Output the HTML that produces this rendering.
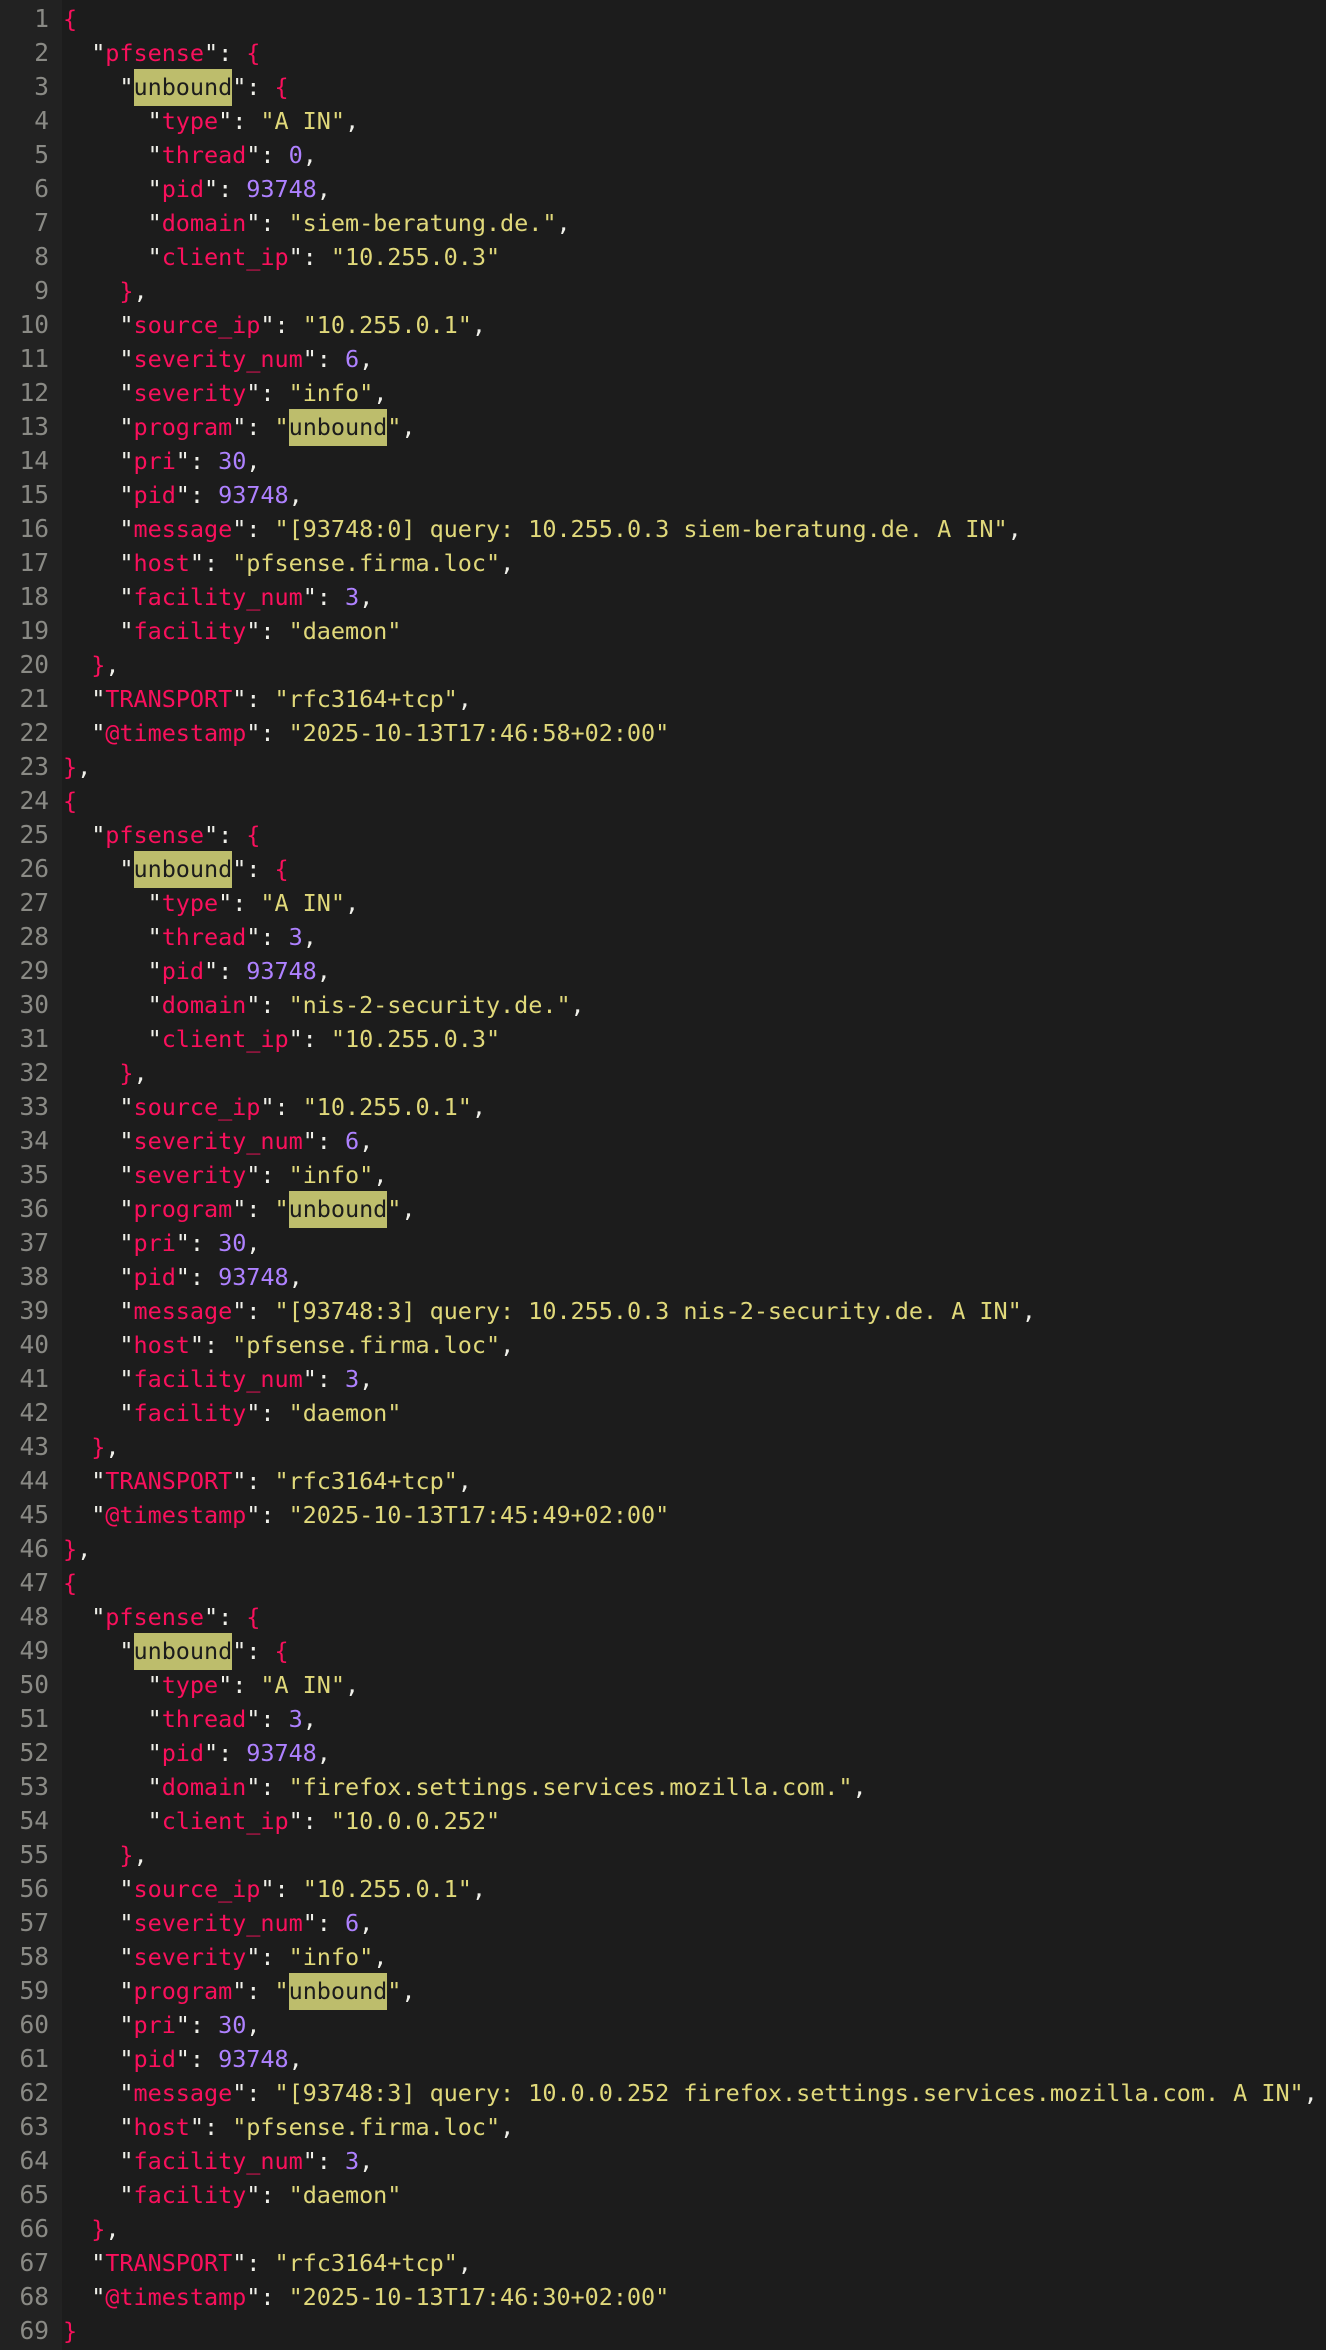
<!DOCTYPE html>
<html><head><meta charset="utf-8"><style>
html,body{margin:0;padding:0;background:#1c1c1c;width:1326px;height:2350px;overflow:hidden}
.g{position:absolute;left:0;top:0;width:62px;height:2350px;background:#222222}
.n{position:absolute;left:0;top:2px;width:49px;text-align:right;font:24.5px/34px "DejaVu Sans Mono","Liberation Mono",monospace;color:#8a8a85;white-space:pre}
pre{position:absolute;left:63px;top:2px;margin:0;font:23.5px/34px "DejaVu Sans Mono","Liberation Mono",monospace;color:#f0f0ea;letter-spacing:-0.05px}
.k{color:#f9105c}.s{color:#e0d87a}.m{color:#ae81ff}.b{color:#f9105c}
.h{background:#bdbd6c;color:#1c1c1c;padding:4px 0 5px}
</style></head><body>
<div class="g"></div>
<div class="n">1
2
3
4
5
6
7
8
9
10
11
12
13
14
15
16
17
18
19
20
21
22
23
24
25
26
27
28
29
30
31
32
33
34
35
36
37
38
39
40
41
42
43
44
45
46
47
48
49
50
51
52
53
54
55
56
57
58
59
60
61
62
63
64
65
66
67
68
69</div>
<pre><span class="b">{</span>
  "<span class="k">pfsense</span>": <span class="b">{</span>
    "<span class="h">unbound</span>": <span class="b">{</span>
      "<span class="k">type</span>": <span class="s">"A IN"</span>,
      "<span class="k">thread</span>": <span class="m">0</span>,
      "<span class="k">pid</span>": <span class="m">93748</span>,
      "<span class="k">domain</span>": <span class="s">"siem-beratung.de."</span>,
      "<span class="k">client_ip</span>": <span class="s">"10.255.0.3"</span>
    <span class="b">}</span>,
    "<span class="k">source_ip</span>": <span class="s">"10.255.0.1"</span>,
    "<span class="k">severity_num</span>": <span class="m">6</span>,
    "<span class="k">severity</span>": <span class="s">"info"</span>,
    "<span class="k">program</span>": <span class="s">"</span><span class="h">unbound</span><span class="s">"</span>,
    "<span class="k">pri</span>": <span class="m">30</span>,
    "<span class="k">pid</span>": <span class="m">93748</span>,
    "<span class="k">message</span>": <span class="s">"[93748:0] query: 10.255.0.3 siem-beratung.de. A IN"</span>,
    "<span class="k">host</span>": <span class="s">"pfsense.firma.loc"</span>,
    "<span class="k">facility_num</span>": <span class="m">3</span>,
    "<span class="k">facility</span>": <span class="s">"daemon"</span>
  <span class="b">}</span>,
  "<span class="k">TRANSPORT</span>": <span class="s">"rfc3164+tcp"</span>,
  "<span class="k">@timestamp</span>": <span class="s">"2025-10-13T17:46:58+02:00"</span>
<span class="b">}</span>,
<span class="b">{</span>
  "<span class="k">pfsense</span>": <span class="b">{</span>
    "<span class="h">unbound</span>": <span class="b">{</span>
      "<span class="k">type</span>": <span class="s">"A IN"</span>,
      "<span class="k">thread</span>": <span class="m">3</span>,
      "<span class="k">pid</span>": <span class="m">93748</span>,
      "<span class="k">domain</span>": <span class="s">"nis-2-security.de."</span>,
      "<span class="k">client_ip</span>": <span class="s">"10.255.0.3"</span>
    <span class="b">}</span>,
    "<span class="k">source_ip</span>": <span class="s">"10.255.0.1"</span>,
    "<span class="k">severity_num</span>": <span class="m">6</span>,
    "<span class="k">severity</span>": <span class="s">"info"</span>,
    "<span class="k">program</span>": <span class="s">"</span><span class="h">unbound</span><span class="s">"</span>,
    "<span class="k">pri</span>": <span class="m">30</span>,
    "<span class="k">pid</span>": <span class="m">93748</span>,
    "<span class="k">message</span>": <span class="s">"[93748:3] query: 10.255.0.3 nis-2-security.de. A IN"</span>,
    "<span class="k">host</span>": <span class="s">"pfsense.firma.loc"</span>,
    "<span class="k">facility_num</span>": <span class="m">3</span>,
    "<span class="k">facility</span>": <span class="s">"daemon"</span>
  <span class="b">}</span>,
  "<span class="k">TRANSPORT</span>": <span class="s">"rfc3164+tcp"</span>,
  "<span class="k">@timestamp</span>": <span class="s">"2025-10-13T17:45:49+02:00"</span>
<span class="b">}</span>,
<span class="b">{</span>
  "<span class="k">pfsense</span>": <span class="b">{</span>
    "<span class="h">unbound</span>": <span class="b">{</span>
      "<span class="k">type</span>": <span class="s">"A IN"</span>,
      "<span class="k">thread</span>": <span class="m">3</span>,
      "<span class="k">pid</span>": <span class="m">93748</span>,
      "<span class="k">domain</span>": <span class="s">"firefox.settings.services.mozilla.com."</span>,
      "<span class="k">client_ip</span>": <span class="s">"10.0.0.252"</span>
    <span class="b">}</span>,
    "<span class="k">source_ip</span>": <span class="s">"10.255.0.1"</span>,
    "<span class="k">severity_num</span>": <span class="m">6</span>,
    "<span class="k">severity</span>": <span class="s">"info"</span>,
    "<span class="k">program</span>": <span class="s">"</span><span class="h">unbound</span><span class="s">"</span>,
    "<span class="k">pri</span>": <span class="m">30</span>,
    "<span class="k">pid</span>": <span class="m">93748</span>,
    "<span class="k">message</span>": <span class="s">"[93748:3] query: 10.0.0.252 firefox.settings.services.mozilla.com. A IN"</span>,
    "<span class="k">host</span>": <span class="s">"pfsense.firma.loc"</span>,
    "<span class="k">facility_num</span>": <span class="m">3</span>,
    "<span class="k">facility</span>": <span class="s">"daemon"</span>
  <span class="b">}</span>,
  "<span class="k">TRANSPORT</span>": <span class="s">"rfc3164+tcp"</span>,
  "<span class="k">@timestamp</span>": <span class="s">"2025-10-13T17:46:30+02:00"</span>
<span class="b">}</span></pre>
</body></html>
